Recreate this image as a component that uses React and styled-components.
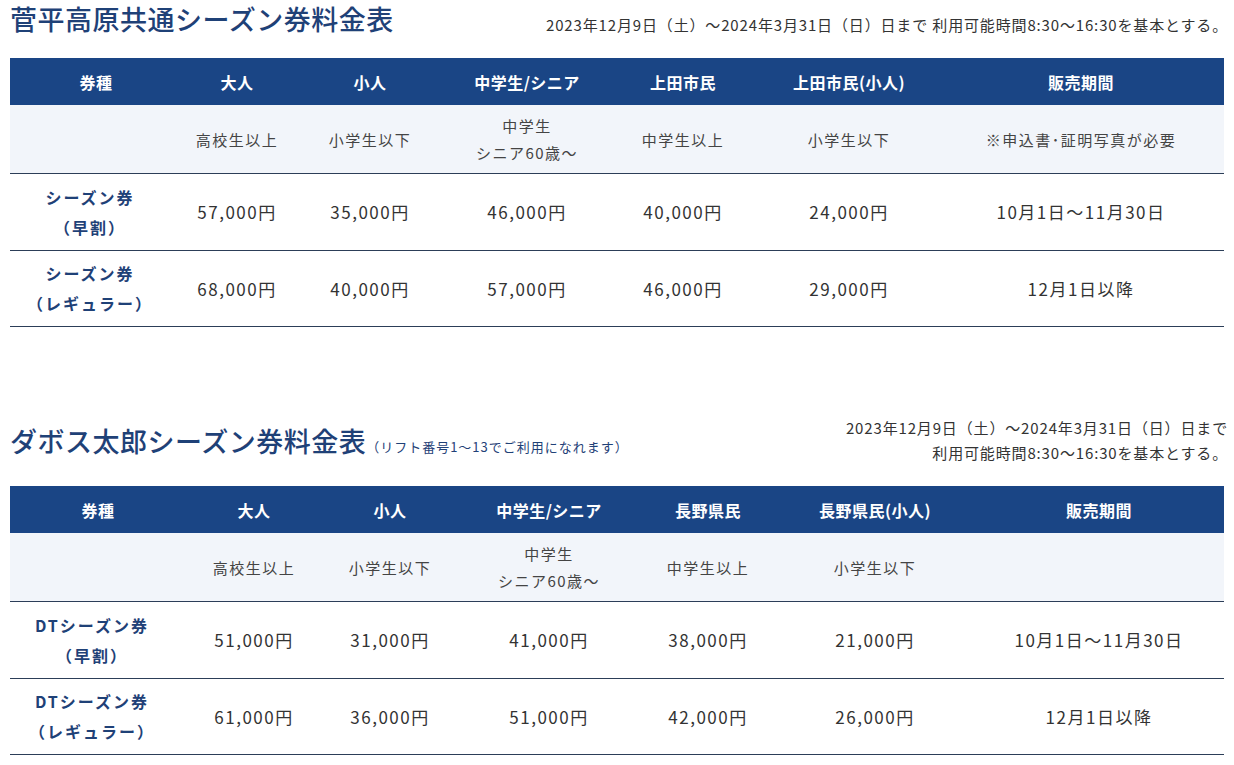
import styled, { createGlobalStyle } from "styled-components";

const GlobalStyle = createGlobalStyle`
    *, *::before, *::after {
        box-sizing: border-box;
    }
    body {
        margin: 0;
        background: #ffffff;
        font-family: "Noto Sans CJK JP", "Noto Sans", sans-serif;
        color: #333;
    }
`

const Pagina = styled.div`
    padding: 0 10px;
`
const Seccion = styled.section`
    & + & {
        margin-top: 88px;
    }
`
const Encabezado = styled.div`
    display: flex;
    justify-content: space-between;
    align-items: flex-end;
    margin-bottom: 20px;
`
const Titulo = styled.h2`
    margin: 0;
    font-size: 27px;
    font-weight: 500;
    line-height: 38px;
    color: #1f4177;
    letter-spacing: 0.5px;
`
const Nota = styled.small`
    font-size: 13px;
    font-weight: 400;
    letter-spacing: 1px;
`
const Periodo = styled.p`
    margin: 0 -4px 1px 0;
    font-size: 15px;
    line-height: 25px;
    text-align: right;
    color: #333;
    letter-spacing: 0.85px;
`
const Tabla = styled.div`
    display: flex;
    flex-direction: column;
`
const Fila = styled.div`
    display: grid;
    grid-template-columns: ${(p) => p.$cols};
    align-items: center;
    text-align: center;
`
const FilaCabeza = styled(Fila)`
    height: 47px;
    background: #1a4585;
    color: #ffffff;
    font-size: 16px;
    font-weight: 700;
    letter-spacing: 0.5px;
`
const FilaSub = styled(Fila)`
    height: 69px;
    background: #f2f5fa;
    border-bottom: 1px solid #2c3e58;
    font-size: 15px;
    line-height: 27px;
    color: #444;
    letter-spacing: 1.5px;
`
const FilaDato = styled(Fila)`
    height: 76.5px;
    border-bottom: 1px solid #2c3e58;
    font-size: 17px;
    color: #333;
    letter-spacing: 1.5px;
`
const Tipo = styled.div`
    padding-right: 12px;
    font-size: 16px;
    font-weight: 700;
    color: #1f4177;
    line-height: 30px;
    letter-spacing: 2px;
`

const tablas = [
    {
        titulo: "菅平高原共通シーズン券料金表",
        periodo: ["2023年12月9日（土）～2024年3月31日（日）日まで 利用可能時間8:30～16:30を基本とする。"],
        cols: "172px 110px 156px 158px 154px 178px 1fr",
        cabeza: ["券種", "大人", "小人", "中学生/シニア", "上田市民", "上田市民(小人)", "販売期間"],
        sub: [[], ["高校生以上"], ["小学生以下"], ["中学生", "シニア60歳～"], ["中学生以上"], ["小学生以下"], ["※申込書･証明写真が必要"]],
        filas: [
            [["シーズン券", "（早割）"], "57,000円", "35,000円", "46,000円", "40,000円", "24,000円", "10月1日～11月30日"],
            [["シーズン券", "（レギュラー）"], "68,000円", "40,000円", "57,000円", "46,000円", "29,000円", "12月1日以降"],
        ],
    },
    {
        titulo: "ダボス太郎シーズン券料金表",
        nota: "（リフト番号1～13でご利用になれます）",
        periodo: ["2023年12月9日（土）～2024年3月31日（日）日まで", "利用可能時間8:30～16:30を基本とする。"],
        cols: "176px 136px 136px 182px 136px 198px 1fr",
        cabeza: ["券種", "大人", "小人", "中学生/シニア", "長野県民", "長野県民(小人)", "販売期間"],
        sub: [[], ["高校生以上"], ["小学生以下"], ["中学生", "シニア60歳～"], ["中学生以上"], ["小学生以下"], []],
        filas: [
            [["DTシーズン券", "（早割）"], "51,000円", "31,000円", "41,000円", "38,000円", "21,000円", "10月1日～11月30日"],
            [["DTシーズン券", "（レギュラー）"], "61,000円", "36,000円", "51,000円", "42,000円", "26,000円", "12月1日以降"],
        ],
    },
];

function Lineas({ textos }) {
    return textos.map((t, i) => (
        <span key={i}>
            {i > 0 && <br />}
            {t}
        </span>
    ));
}

function TablaPrecios({ datos }) {
    return (
        <Seccion>
            <Encabezado>
                <Titulo>
                    {datos.titulo}
                    {datos.nota && <Nota>{datos.nota}</Nota>}
                </Titulo>
                <Periodo>
                    <Lineas textos={datos.periodo} />
                </Periodo>
            </Encabezado>
            <Tabla>
                <FilaCabeza $cols={datos.cols}>
                    {datos.cabeza.map((c) => <div key={c}>{c}</div>)}
                </FilaCabeza>
                <FilaSub $cols={datos.cols}>
                    {datos.sub.map((s, i) => <div key={i}><Lineas textos={s} /></div>)}
                </FilaSub>
                {datos.filas.map((fila, i) => (
                    <FilaDato key={i} $cols={datos.cols}>
                        <Tipo><Lineas textos={fila[0]} /></Tipo>
                        {fila.slice(1).map((v, j) => <div key={j}>{v}</div>)}
                    </FilaDato>
                ))}
            </Tabla>
        </Seccion>
    );
}

function App() {
    return (
        <Pagina>
            <GlobalStyle />
            {tablas.map((t) => <TablaPrecios key={t.titulo} datos={t} />)}
        </Pagina>
    );
}

export default App
